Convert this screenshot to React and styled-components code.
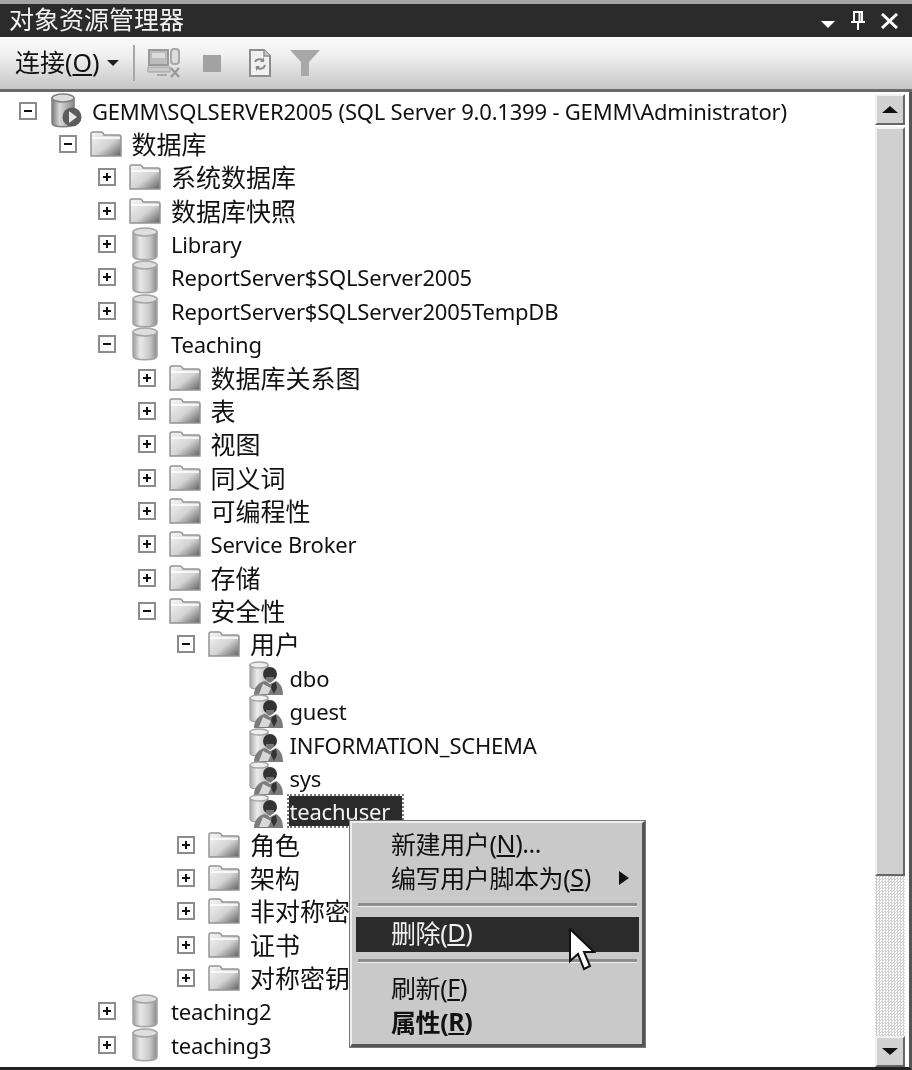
import React from "react";
import styled, { createGlobalStyle } from "styled-components";

const rows = [
  { level: 0, box: "-", icon: "server", text: "GEMM\\SQLSERVER2005 (SQL Server 9.0.1399 - GEMM\\Administrator)" },
  { level: 1, box: "-", icon: "folder", text: "数据库", cjk: true },
  { level: 2, box: "+", icon: "folder", text: "系统数据库", cjk: true },
  { level: 2, box: "+", icon: "folder", text: "数据库快照", cjk: true },
  { level: 2, box: "+", icon: "db", text: "Library" },
  { level: 2, box: "+", icon: "db", text: "ReportServer$SQLServer2005" },
  { level: 2, box: "+", icon: "db", text: "ReportServer$SQLServer2005TempDB" },
  { level: 2, box: "-", icon: "db", text: "Teaching" },
  { level: 3, box: "+", icon: "folder", text: "数据库关系图", cjk: true },
  { level: 3, box: "+", icon: "folder", text: "表", cjk: true },
  { level: 3, box: "+", icon: "folder", text: "视图", cjk: true },
  { level: 3, box: "+", icon: "folder", text: "同义词", cjk: true },
  { level: 3, box: "+", icon: "folder", text: "可编程性", cjk: true },
  { level: 3, box: "+", icon: "folder", text: "Service Broker" },
  { level: 3, box: "+", icon: "folder", text: "存储", cjk: true },
  { level: 3, box: "-", icon: "folder", text: "安全性", cjk: true },
  { level: 4, box: "-", icon: "folder", text: "用户", cjk: true },
  { level: 5, icon: "user", text: "dbo" },
  { level: 5, icon: "user", text: "guest" },
  { level: 5, icon: "user", text: "INFORMATION_SCHEMA" },
  { level: 5, icon: "user", text: "sys" },
  { level: 5, icon: "user", text: "teachuser", selected: true },
  { level: 4, box: "+", icon: "folder", text: "角色", cjk: true },
  { level: 4, box: "+", icon: "folder", text: "架构", cjk: true },
  { level: 4, box: "+", icon: "folder", text: "非对称密钥", cjk: true },
  { level: 4, box: "+", icon: "folder", text: "证书", cjk: true },
  { level: 4, box: "+", icon: "folder", text: "对称密钥", cjk: true },
  { level: 2, box: "+", icon: "db", text: "teaching2" },
  { level: 2, box: "+", icon: "db", text: "teaching3" },
];

const FolderIcon = () => (
  <svg width="32" height="26" viewBox="0 0 32 26">
    <defs>
      <linearGradient id="fold" x1="0" y1="0" x2="1" y2="1">
        <stop offset="0" stopColor="#f6f6f6" />
        <stop offset="0.55" stopColor="#d4d4d4" />
        <stop offset="1" stopColor="#5e5e5e" />
      </linearGradient>
    </defs>
    <path d="M1 25V3q0-2 2-2h8q2 0 3 3h15q2 0 2 2v19z" fill="url(#fold)" stroke="#949494" strokeWidth="1.5" />
    <path d="M2 7h28" stroke="#fff" strokeWidth="1.5" />
  </svg>
);

const DbIcon = () => (
  <svg width="28" height="36" viewBox="0 0 28 36">
    <defs>
      <linearGradient id="cyl" x1="0" y1="0" x2="1" y2="0">
        <stop offset="0" stopColor="#9c9c9c" />
        <stop offset="0.3" stopColor="#e8e8e8" />
        <stop offset="0.7" stopColor="#c8c8c8" />
        <stop offset="1" stopColor="#8a8a8a" />
      </linearGradient>
    </defs>
    <path d="M2 6v24c0 5 24 5 24 0V6z" fill="url(#cyl)" stroke="#a4a4a4" strokeWidth="1.5" />
    <ellipse cx="14" cy="6" rx="12" ry="4" fill="#dedede" stroke="#a4a4a4" strokeWidth="1.5" />
  </svg>
);

const ServerIcon = () => (
  <svg width="32" height="36" viewBox="0 0 32 36">
    <defs>
      <linearGradient id="srv" x1="0" y1="0" x2="1" y2="0">
        <stop offset="0" stopColor="#7c7c7c" />
        <stop offset="0.35" stopColor="#d8d8d8" />
        <stop offset="1" stopColor="#8a8a8a" />
      </linearGradient>
    </defs>
    <path d="M2 5v25c0 5 22 5 22 0V5z" fill="url(#srv)" stroke="#808080" strokeWidth="1.5" />
    <ellipse cx="13" cy="5" rx="11" ry="4" fill="#ddd" stroke="#808080" strokeWidth="1.5" />
    <circle cx="22" cy="24" r="9.5" fill="#5c5c5c" />
    <path d="M19 18l8 6-8 6z" fill="#e8e8e8" />
  </svg>
);

const UserIcon = () => (
  <svg width="36" height="34" viewBox="0 0 36 34">
    <defs>
      <linearGradient id="usr" x1="0" y1="0" x2="1" y2="0">
        <stop offset="0" stopColor="#a8a8a8" />
        <stop offset="0.4" stopColor="#ececec" />
        <stop offset="1" stopColor="#bbb" />
      </linearGradient>
    </defs>
    <path d="M2 4v21c0 4 18 4 18 0V4z" fill="url(#usr)" stroke="#a4a4a4" strokeWidth="1.3" />
    <ellipse cx="11" cy="4" rx="9" ry="3" fill="#eee" stroke="#a4a4a4" strokeWidth="1.3" />
    <path d="M6 34c0-8 5-13 11-14l5 3 6-3c4 2 7 6 7 14z" fill="#7c7c7c" />
    <path d="M11 33l4-10 8 4-3 6z" fill="#d8d8d8" />
    <path d="M24 23l4-2 1 6-3 6-3-6z" fill="#333" />
    <circle cx="22" cy="13" r="7" fill="#333" />
    <path d="M18 16h8v3l-4 3-4-3z" fill="#777" />
  </svg>
);

const icons = { folder: FolderIcon, db: DbIcon, server: ServerIcon, user: UserIcon };

const ConnectIcon = () => (
  <svg width="36" height="32" viewBox="0 0 36 32">
    <rect x="2" y="3" width="19" height="15" fill="#bcbcbc" stroke="#9a9a9a" strokeWidth="2" />
    <rect x="5" y="6" width="13" height="5" fill="#dcdcdc" />
    <rect x="1" y="20" width="22" height="5" fill="#c8c8c8" stroke="#a0a0a0" />
    <rect x="24" y="2" width="8" height="15" rx="3" fill="#ddd" stroke="#a8a8a8" strokeWidth="2" />
    <path d="M10 28h10" stroke="#a8a8a8" strokeWidth="2" />
    <path d="M24 21l8 9M32 21l-8 9" stroke="#9a9a9a" strokeWidth="2.4" />
  </svg>
);

const RefreshDocIcon = () => (
  <svg width="24" height="30" viewBox="0 0 24 30">
    <path d="M2 2h14l6 6v20H2z" fill="#f0f0f0" stroke="#8e8e8e" strokeWidth="2" />
    <path d="M16 2v6h6" fill="#ccc" stroke="#8e8e8e" strokeWidth="1.5" />
    <path d="M7 14c1-3 6-4 9-1M17 17c-1 4-6 5-9 2" fill="none" stroke="#888" strokeWidth="2" />
    <path d="M16 9v5h-4zM8 23v-5h4z" fill="#888" />
  </svg>
);

const FunnelIcon = () => (
  <svg width="32" height="28" viewBox="0 0 32 28">
    <path d="M1 1h30L20 13v14h-8V13z" fill="#a8a8a8" />
  </svg>
);

const PinIcon = () => (
  <svg width="16" height="20" viewBox="0 0 16 20">
    <path d="M4 1h8v10H4zM1 11h14M8 11v8M9.5 2v8" fill="none" stroke="#fff" strokeWidth="2" />
  </svg>
);

const CloseIcon = () => (
  <svg width="17" height="16" viewBox="0 0 17 16">
    <path d="M1 1l15 14M16 1L1 15" stroke="#fff" strokeWidth="3" />
  </svg>
);

const CursorIcon = () => (
  <svg width="28" height="46" viewBox="0 0 28 46">
    <path d="M2 1v32l8-7 6 15 6-3-6-14h10z" fill="#fff" stroke="#111" strokeWidth="2" strokeLinejoin="miter" />
  </svg>
);

const App = () => (
  <>
    <GlobalStyle />
    <Window>
      <TitleBar>
        <TitleText>对象资源管理器</TitleText>
        <TitleButtons>
          <TitleArrow />
          <PinIcon />
          <CloseIcon />
        </TitleButtons>
      </TitleBar>
      <Toolbar>
        <ConnectLabel>
          连接(<u>O</u>)
        </ConnectLabel>
        <ToolArrow />
        <ToolSeparator />
        <ConnectIcon />
        <StopSquare />
        <RefreshDocIcon />
        <FunnelIcon />
      </Toolbar>
      <Body>
        <Tree>
          {rows.map((row) => {
            const Icon = icons[row.icon];
            return (
              <Row key={row.text} $level={row.level}>
                <BoxSlot>{row.box && <ExpandBox $open={row.box === "-"} />}</BoxSlot>
                <IconSlot $icon={row.icon}>
                  <Icon />
                </IconSlot>
                <Label $selected={row.selected} $cjk={row.cjk}>
                  {row.text}
                </Label>
              </Row>
            );
          })}
          <Menu>
            <MenuItem>
              新建用户(<u>N</u>)...
            </MenuItem>
            <MenuItem>
              编写用户脚本为(<u>S</u>)
              <SubArrow />
            </MenuItem>
            <MenuDivider $top={8} $bottom={10} />
            <MenuItem $active>
              删除(<u>D</u>)
            </MenuItem>
            <MenuDivider $top={7} $bottom={8} />
            <MenuItem>
              刷新(<u>F</u>)
            </MenuItem>
            <MenuItem $bold>
              属性(<u>R</u>)
            </MenuItem>
            <CursorWrap>
              <CursorIcon />
            </CursorWrap>
          </Menu>
        </Tree>
        <ScrollBar>
          <ScrollButton>
            <UpArrow />
          </ScrollButton>
          <Thumb />
          <Track />
          <ScrollButton>
            <DownArrow />
          </ScrollButton>
        </ScrollBar>
      </Body>
    </Window>
  </>
);

const GlobalStyle = createGlobalStyle`
  html, body {
    margin: 0;
    padding: 0;
    background: #fff;
  }
  body {
    font-family: "Noto Sans", "Noto Sans CJK SC", sans-serif;
  }
`;

const Window = styled.div`
  width: 912px;
  height: 1070px;
  display: flex;
  flex-direction: column;
  box-sizing: border-box;
  overflow: hidden;
  background: #fff;
  color: #111;
  filter: blur(0.55px);
`;

const TitleBar = styled.div`
  height: 37px;
  flex: none;
  box-sizing: border-box;
  display: flex;
  align-items: center;
  justify-content: space-between;
  padding: 0 14px 0 9px;
  background: #2b2b2b;
  border-top: 4px solid #a4a4a4;
  color: #f2f2f2;
  font-size: 25px;
  line-height: 30px;
`;

const TitleText = styled.span`
  margin-top: -3px;
`;

const TitleButtons = styled.div`
  display: flex;
  align-items: center;
  gap: 15px;
`;

const TitleArrow = styled.div`
  width: 0;
  height: 0;
  margin-top: 8px;
  border-left: 7px solid transparent;
  border-right: 7px solid transparent;
  border-top: 7px solid #fff;
`;

const Toolbar = styled.div`
  height: 55px;
  flex: none;
  box-sizing: border-box;
  display: flex;
  align-items: center;
  padding-left: 15px;
  background: linear-gradient(#fafafa, #f0f0f0 35%, #c6c6c6);
  border-bottom: 3px solid #6a6a6a;

  & > svg:nth-of-type(1) {
    margin-left: 12px;
  }
  & > svg:nth-of-type(2) {
    margin-left: 27px;
  }
  & > svg:nth-of-type(3) {
    margin-left: 17px;
  }
`;

const ConnectLabel = styled.span`
  font-size: 25px;
  line-height: 30px;
  white-space: nowrap;
  margin-top: -3px;
`;

const ToolArrow = styled.div`
  width: 0;
  height: 0;
  margin-left: 7px;
  border-left: 6px solid transparent;
  border-right: 6px solid transparent;
  border-top: 6px solid #222;
`;

const ToolSeparator = styled.div`
  width: 2px;
  height: 36px;
  margin-left: 14px;
  background: #a8a8a8;
`;

const StopSquare = styled.div`
  width: 18px;
  height: 17px;
  margin-left: 20px;
  background: #a2a2a2;
`;

const Body = styled.div`
  flex: 1;
  min-height: 0;
  display: flex;
  box-sizing: border-box;
  border-right: 3px solid #555;
  border-bottom: 3px solid #222;
  padding-right: 4px;
`;

const Tree = styled.div`
  position: relative;
  flex: 1;
  min-width: 0;
  overflow: hidden;
  padding-top: 2px;
`;

const Row = styled.div`
  height: 33.37px;
  display: flex;
  align-items: center;
  padding-left: ${(p) => 19 + p.$level * 39.5}px;
  white-space: nowrap;
`;

const BoxSlot = styled.div`
  width: 31px;
  flex: none;
  display: flex;
  align-items: center;
`;

const ExpandBox = styled.div`
  position: relative;
  width: 18px;
  height: 18px;
  box-sizing: border-box;
  border: 2px solid #8c8c8c;
  background: #fff;

  &::before {
    content: "";
    position: absolute;
    left: 3px;
    top: 6px;
    width: 8px;
    height: 2px;
    background: #111;
  }

  &::after {
    content: "";
    display: ${(p) => (p.$open ? "none" : "block")};
    position: absolute;
    left: 6px;
    top: 3px;
    width: 2px;
    height: 8px;
    background: #111;
  }
`;

const IconSlot = styled.div`
  width: 42px;
  flex: none;
  display: flex;
  align-items: center;
  padding-left: ${(p) => (p.$icon === "db" ? 2 : 0)}px;
  box-sizing: border-box;
`;

const Label = styled.span`
  font-size: ${(p) => (p.$cjk ? 25 : 22)}px;
  line-height: 30px;
  letter-spacing: ${(p) => (p.$cjk ? 0 : -0.2)}px;
  color: ${(p) => (p.$selected ? "#f4f4f4" : "#111")};
  background: ${(p) => (p.$selected ? "#2b2b2b" : "transparent")};
  outline: ${(p) => (p.$selected ? "2px dotted #777" : "none")};
  margin-left: ${(p) => (p.$selected ? "-1px" : "0")};
  padding: ${(p) => (p.$selected ? "0 12px 0 1px" : "0")};
`;

const Menu = styled.div`
  position: absolute;
  left: 350px;
  top: 729px;
  width: 295px;
  height: 226px;
  box-sizing: border-box;
  padding: 4px 3px 0 4px;
  background: #c9c9c9;
  border-top: 2px solid #eee;
  border-left: 2px solid #eee;
  border-right: 3px solid #555;
  border-bottom: 3px solid #555;
  box-shadow: 0 0 0 1px #777;
`;

const MenuItem = styled.div`
  position: relative;
  height: ${(p) => (p.$active ? 35 : 34)}px;
  box-sizing: border-box;
  display: flex;
  align-items: center;
  padding: 0 0 ${(p) => (p.$active ? 5 : 3)}px 35px;
  font-size: 25px;
  letter-spacing: -0.4px;
  font-weight: ${(p) => (p.$bold ? 700 : 400)};
  color: ${(p) => (p.$active ? "#f0f0f0" : "#111")};
  background: ${(p) => (p.$active ? "#2b2b2b" : "transparent")};
  white-space: pre;
`;

const SubArrow = styled.div`
  position: absolute;
  right: 10px;
  top: 10px;
  width: 0;
  height: 0;
  border-top: 7px solid transparent;
  border-bottom: 7px solid transparent;
  border-left: 10px solid #111;
`;

const MenuDivider = styled.div`
  height: 3px;
  margin: ${(p) => p.$top}px 2px ${(p) => p.$bottom}px 2px;
  background: #8e8e8e;
  border-bottom: 1px solid #f0f0f0;
`;

const CursorWrap = styled.div`
  position: absolute;
  left: 216px;
  top: 105px;
  line-height: 0;
`;

const ScrollBar = styled.div`
  width: 30px;
  flex: none;
  display: flex;
  flex-direction: column;
  padding-top: 2px;
`;

const ScrollButton = styled.div`
  height: 31px;
  flex: none;
  box-sizing: border-box;
  display: flex;
  align-items: center;
  justify-content: center;
  background: #d2d2d2;
  border: 2px solid;
  border-color: #f2f2f2 #666 #666 #f2f2f2;
`;

const UpArrow = styled.div`
  width: 0;
  height: 0;
  border-left: 8px solid transparent;
  border-right: 8px solid transparent;
  border-bottom: 7px solid #111;
`;

const DownArrow = styled.div`
  width: 0;
  height: 0;
  border-left: 8px solid transparent;
  border-right: 8px solid transparent;
  border-top: 7px solid #111;
`;

const Thumb = styled.div`
  height: 749px;
  flex: none;
  margin-top: 2px;
  box-sizing: border-box;
  background: #d0d0d0;
  border: 2px solid;
  border-color: #f2f2f2 #666 #666 #f2f2f2;
`;

const Track = styled.div`
  flex: 1;
  background-color: #fff;
  background-image: conic-gradient(#d0d0d0 25%, #fff 0 50%, #d0d0d0 0 75%, #fff 0);
  background-size: 3px 3px;
`;

export default App;
